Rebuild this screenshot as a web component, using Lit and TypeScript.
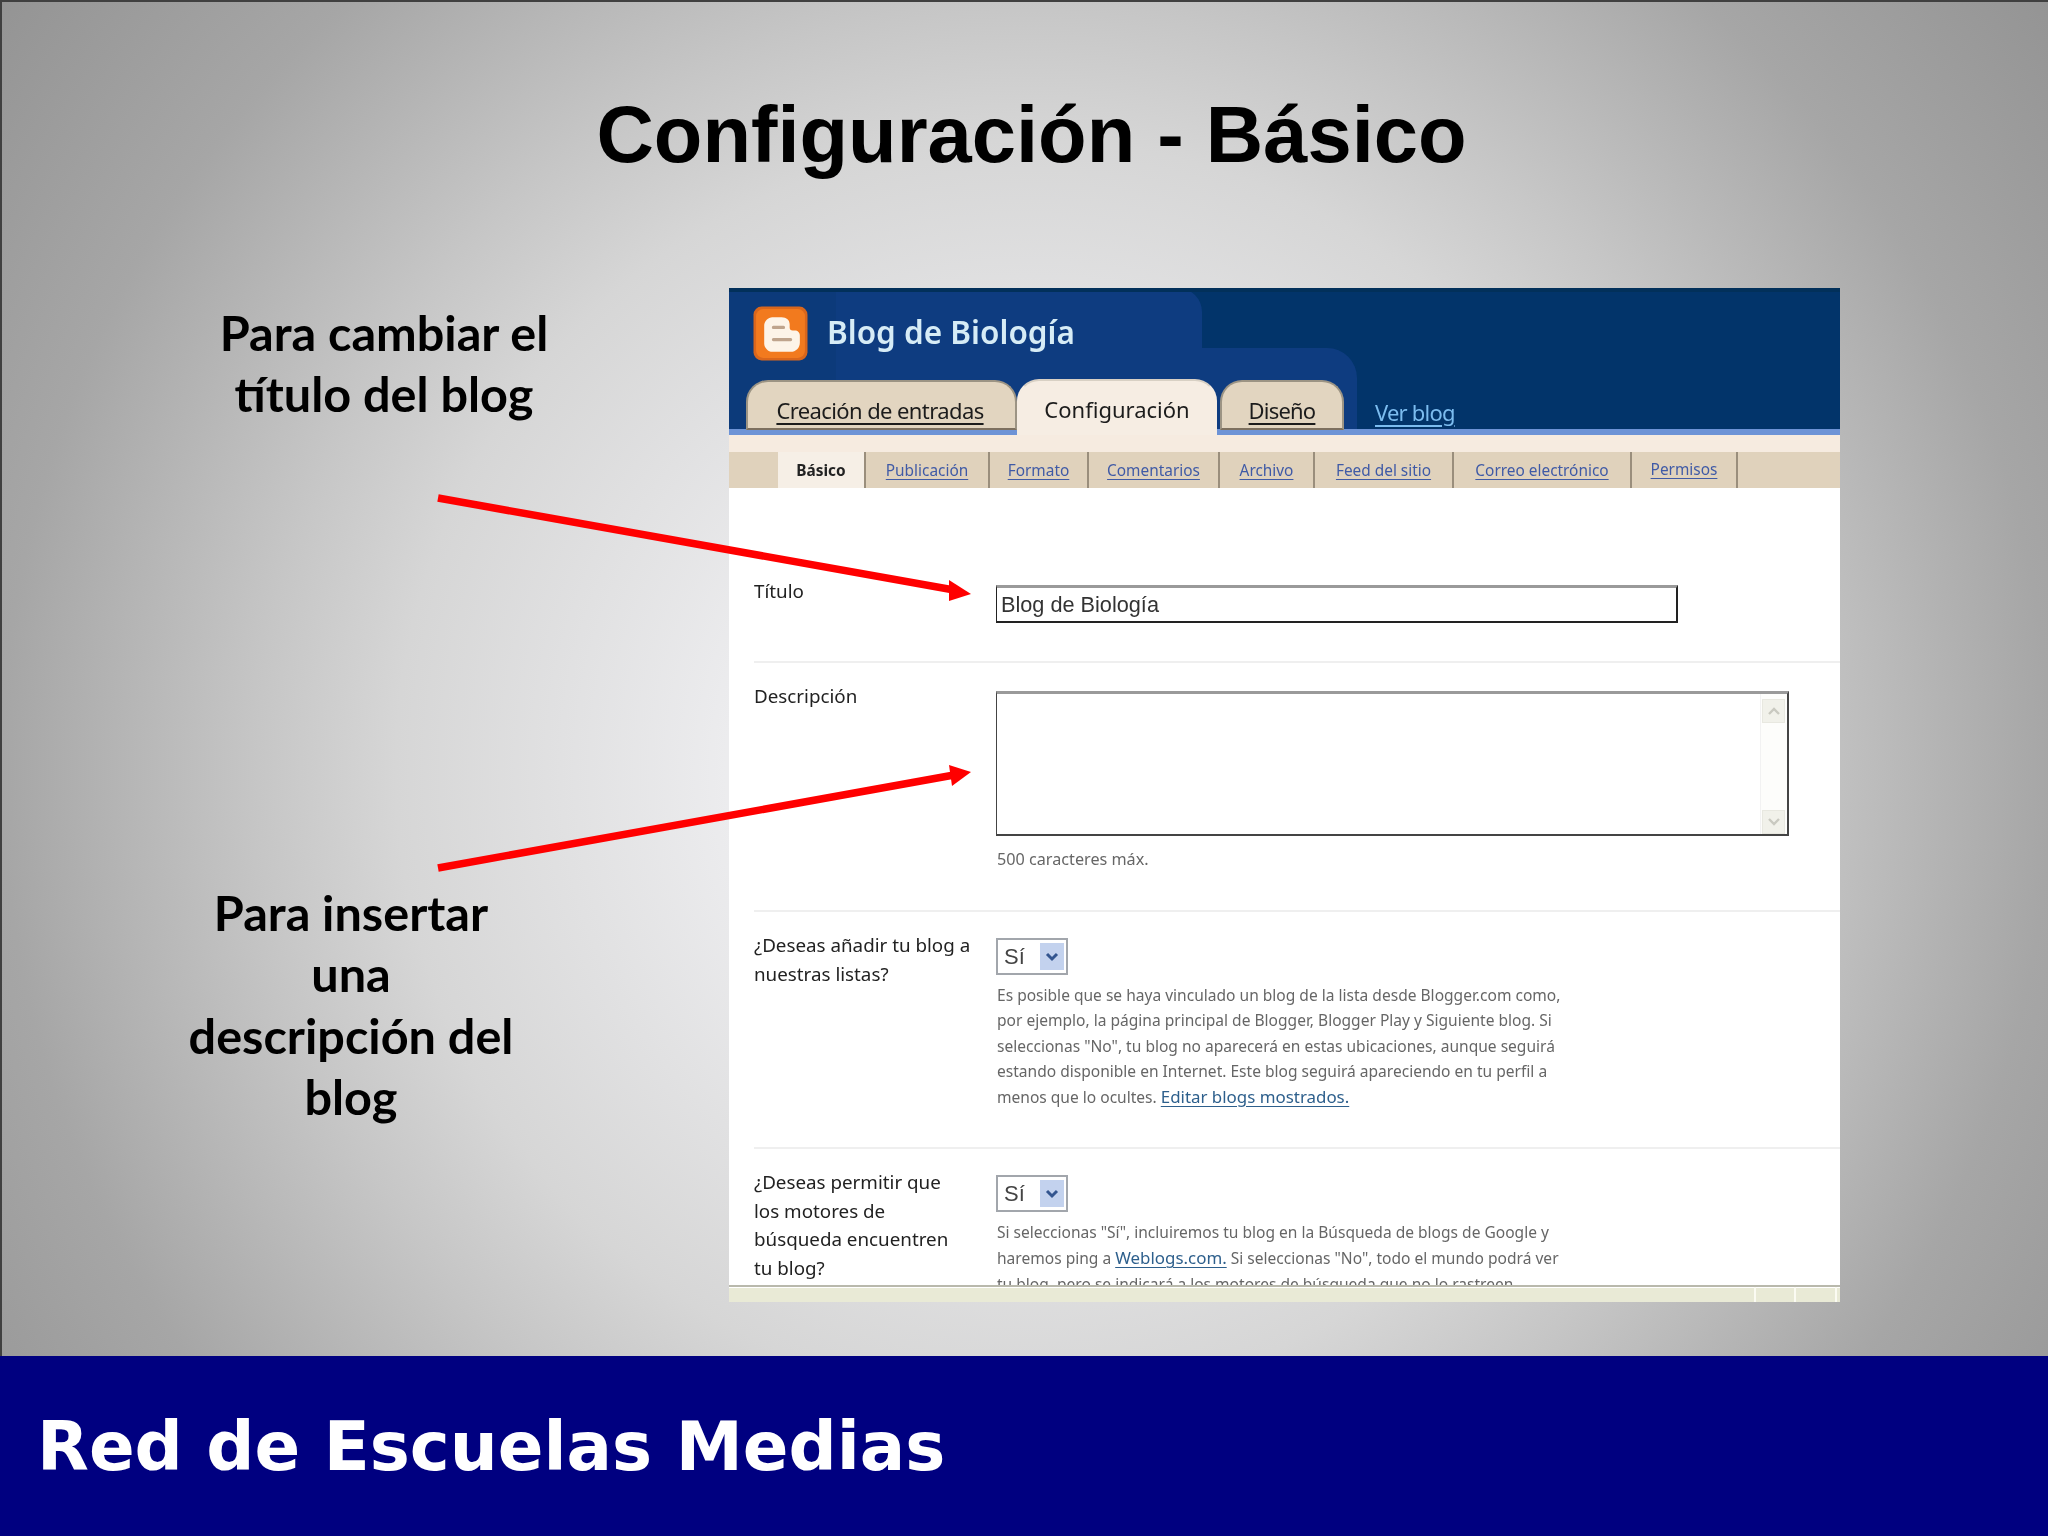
import { LitElement, html, css } from "lit";
import { customElement } from "lit/decorators.js";

const subTabs = [
  ["Publicación", 124],
  ["Formato", 99],
  ["Comentarios", 131],
  ["Archivo", 95],
  ["Feed del sitio", 139],
  ["Correo electrónico", 178],
  ["Permisos", 106],
] as const;

@customElement("app-root")
export class AppRoot extends LitElement {
  static styles = css`
    :host { display: block; width: 2048px; height: 1536px; overflow: hidden; }
    * { box-sizing: border-box; }
    .slide { width: 2048px; height: 1536px; display: flex; flex-direction: column; }
    .stage {
      position: relative; height: 1356px; display: flex; flex-direction: column;
      border-left: 2px solid #404040; border-top: 2px solid #404040;
      background: radial-gradient(circle 1280px at 1024px 768px, #f0f0f2 0px, #ececee 300px, #d6d6d6 630px, #c6c6c6 768px, #a6a6a6 1024px, #949494 1280px);
    }
    h1 {
      margin: 0; height: 286px; padding: 0 0 20px 13px; display: flex; align-items: center; justify-content: center;
      font: 700 79.5px "Liberation Sans", Arial, sans-serif; color: #000;
    }
    .body { display: flex; }
    .notes { width: 727px; flex: none; display: flex; flex-direction: column; }
    .note { width: 420px; text-align: center; font: 700 48.6px/61.4px Lato, sans-serif; color: #000; }
    .note.first { margin: 14px 0 0 172px; }
    .note.second { margin: 457px 0 0 139px; }

    .panel { width: 1111px; height: 1014px; display: flex; flex-direction: column; background: #fff; overflow: hidden; font-family: "Noto Sans", sans-serif; filter: blur(0.45px); }
    .head { position: relative; height: 147px; flex: none; background: #02346a; border-top: 4px solid #02305a; overflow: hidden; }
    .glow { position: absolute; background: #0e3c80; }
    .glow.a { left: 0; top: -4px; width: 108px; height: 148px; background: #0c3a7a; }
    .glow.b { left: 107px; top: -4px; width: 366px; height: 148px; border-radius: 0 24px 0 0; }
    .glow.c { left: 366px; top: 56px; width: 262px; height: 88px; border-radius: 0 30px 0 0; }
    .brand { position: relative; display: flex; align-items: center; gap: 19px; padding: 13px 0 0 24px; height: 70px; }
    .brand svg { width: 55px; height: 55px; flex: none; }
    .brand span { font: 600 31.5px/1 "Noto Sans", sans-serif; color: #d6ecf6; padding-bottom: 4px; }
    .tabs { position: absolute; left: 0; right: 0; bottom: 0; height: 61px; display: flex; align-items: flex-end; padding-left: 17px; border-bottom: 6px solid #6d93d6; }
    .tab {
      height: 50px; margin-bottom: -1px; padding-top: 10px; display: flex; align-items: center; justify-content: center;
      background: #e2d5c0; border: 2px solid #9c9484; border-bottom: 2px solid #7d705f; border-radius: 22px 22px 0 0;
      font: 400 22px/1 "Noto Sans", sans-serif; color: #1c1c1c; text-decoration: underline; text-underline-offset: 4px;
    }
    .tab.active { background: #f6ede3; border-color: #f6ede3; text-decoration: none; height: 56px; margin-bottom: -6px; border-top-color: #d8d0c4; padding-top: 4px; }
    .tab.t1 { width: 271px; letter-spacing: -0.6px; padding-right: 3px; }
    .tab.t2 { width: 200px; }
    .tab.t3 { width: 124px; margin-left: 3px; letter-spacing: -0.8px; }
    .ver { margin: 0 0 6px 31px; font: 400 22px/1 "Noto Sans", sans-serif; color: #7cbcef; letter-spacing: -0.8px; text-decoration: underline; text-underline-offset: 4px; }

    .strip { height: 17px; flex: none; background: #f6ebe0; }
    .sub { height: 36px; flex: none; display: flex; background: #e0d2bc; padding-left: 49px; }
    .sub > * { display: flex; align-items: center; justify-content: center; border-right: 2px solid #9a8e7c; font: 400 15.4px/1 "Noto Sans", sans-serif; padding-top: 2px; }
    .sub .on { width: 88px; background: #f6efe6; font-weight: 700; color: #222; }
    .sub a { color: #3f5aa6; text-decoration: underline; text-underline-offset: 3px; }
    .sub a.raised { padding-bottom: 3px; }

    .form { flex: 1; min-height: 0; overflow: hidden; background: #fff; }
    .row { display: grid; grid-template-columns: 242px 1fr; margin-left: 25px; border-bottom: 2px solid #efefef; }
    .row.r1 { height: 175px; padding-top: 97px; }
    .row.r2 { height: 249px; padding-top: 28px; }
    .row.r3 { height: 237px; padding-top: 26px; }
    .row.r4 { height: 150px; padding-top: 26px; border: 0; }
    .label { font: 400 18.8px/28.5px "Noto Sans", sans-serif; color: #222; margin-top: -7px; }
    .r1 .label { margin-top: -8px; }
    .r2 .label { margin-top: -9px; }
    .input {
      width: 682px; height: 38px; border: solid #222; border-width: 0 2px 2px 1px; border-top: 3px solid #9a9a9a;
      font: 400 21.7px/34px "Liberation Sans", sans-serif; color: #333; padding-left: 4px;
    }
    .area { position: relative; width: 793px; height: 145px; border: solid #444; border-width: 3px 2px 2px 1px; border-top-color: #9a9a9a; display: flex; justify-content: flex-end; }
    .scroll { width: 27px; display: flex; flex-direction: column; justify-content: space-between; border-left: 1px solid #f2f2f2; padding: 5px 1px 0; background: #fdfdfb; }
    .scroll span { width: 23px; height: 24px; background: #f1f1ea; border: 1px solid #e8e8e0; display: flex; align-items: center; justify-content: center; }
    .scroll svg { width: 14px; height: 10px; }
    .hint { margin: 13px 0 0 1px; font: 400 16.2px/20px "Noto Sans", sans-serif; color: #666; }
    .select { width: 72px; height: 37px; border: 2px solid #a2a6ac; display: flex; align-items: center; justify-content: space-between; font: 400 22px/1 "Liberation Sans", sans-serif; color: #444; padding: 0 2px 0 6px; background: #fff; }
    .select i { width: 24px; height: 27px; background: #c3d2ee; display: flex; align-items: center; justify-content: center; }
    .select svg { width: 14px; height: 12px; }
    .help { margin: 8px 0 0 1px; font: 400 15.55px/25.3px "Noto Sans", sans-serif; color: #666; white-space: nowrap; }
    .help a { font-size: 16.9px; color: #2d5f8c; text-decoration: underline; text-underline-offset: 3px; }
    .status { height: 17px; flex: none; display: flex; justify-content: flex-end; background: #e9ead6; border-top: 2px solid #b9b9ac; box-shadow: inset 0 1px 0 #fff; }
    .status span { border-left: 2px solid #fbfbf2; }
    .status .s1 { width: 40px; }
    .status .s2 { width: 41px; }
    .status .s3 { width: 5px; }

    .arrows { position: absolute; left: -2px; top: -2px; width: 2048px; height: 1356px; pointer-events: none; }
    footer { height: 180px; flex: none; background: #000080; color: #fff; padding: 47px 0 0 37px; font: 700 67.4px/1.3 "DejaVu Sans", Verdana, sans-serif; }
  `;

  private chevron(d: string) {
    return html`<svg viewBox="0 0 14 10"><path d=${d} fill="none" stroke="#c9c9c0" stroke-width="2.4"/></svg>`;
  }

  private select() {
    return html`<div class="select">Sí<i><svg viewBox="0 0 14 12"><path d="M2 3l5 5 5-5" fill="none" stroke="#33558f" stroke-width="3"/></svg></i></div>`;
  }

  render() {
    return html`
      <div class="slide">
        <main class="stage">
          <h1>Configuración - Básico</h1>
          <div class="body">
            <div class="notes">
              <div class="note first">Para cambiar el<br />título del blog</div>
              <div class="note second">Para insertar<br />una<br />descripción del<br />blog</div>
            </div>
            <section class="panel">
              <div class="head">
                <i class="glow a"></i><i class="glow b"></i><i class="glow c"></i>
                <div class="brand">
                  <svg viewBox="0 0 54 54">
                    <rect x="0.5" y="0.5" width="53" height="53" rx="8" fill="#d9661c"/>
                    <rect x="3" y="3" width="48" height="48" rx="7" fill="#f27a1e"/>
                    <path d="M19 11h9c5 0 8 3 8 7v3c0 2 1 3 3 3h2c3 0 5 2 5 5v7c0 5-4 9-9 9H19c-4 0-8-4-8-8V19c0-4 4-8 8-8z" fill="#fdf4e8"/>
                    <path d="M20 21h10M20 33h17" stroke="#bfa48c" stroke-width="3" stroke-linecap="round"/>
                  </svg>
                  <span>Blog de Biología</span>
                </div>
                <div class="tabs">
                  <div class="tab t1">Creación de entradas</div>
                  <div class="tab t2 active">Configuración</div>
                  <div class="tab t3">Diseño</div>
                  <a class="ver">Ver blog</a>
                </div>
              </div>
              <div class="strip"></div>
              <nav class="sub">
                <span class="on">Básico</span>
                ${subTabs.map(
                  ([t, w]) => html`<span style="width:${w}px"><a class=${t === "Permisos" ? "raised" : ""}>${t}</a></span>`
                )}
              </nav>
              <div class="form">
                <div class="row r1">
                  <div class="label">Título</div>
                  <div class="input">Blog de Biología</div>
                </div>
                <div class="row r2">
                  <div class="label">Descripción</div>
                  <div>
                    <div class="area">
                      <div class="scroll">
                        <span>${this.chevron("M2 8l5-5 5 5")}</span>
                        <span>${this.chevron("M2 2l5 5 5-5")}</span>
                      </div>
                    </div>
                    <div class="hint">500 caracteres máx.</div>
                  </div>
                </div>
                <div class="row r3">
                  <div class="label">¿Deseas añadir tu blog a<br />nuestras listas?</div>
                  <div>
                    ${this.select()}
                    <div class="help">Es posible que se haya vinculado un blog de la lista desde Blogger.com como,<br />por ejemplo, la página principal de Blogger, Blogger Play y Siguiente blog. Si<br />seleccionas "No", tu blog no aparecerá en estas ubicaciones, aunque seguirá<br />estando disponible en Internet. Este blog seguirá apareciendo en tu perfil a<br />menos que lo ocultes. <a>Editar blogs mostrados.</a></div>
                  </div>
                </div>
                <div class="row r4">
                  <div class="label">¿Deseas permitir que<br />los motores de<br />búsqueda encuentren<br />tu blog?</div>
                  <div>
                    ${this.select()}
                    <div class="help">Si seleccionas "Sí", incluiremos tu blog en la Búsqueda de blogs de Google y<br />haremos ping a <a>Weblogs.com.</a> Si seleccionas "No", todo el mundo podrá ver<br />tu blog, pero se indicará a los motores de búsqueda que no lo rastreen.</div>
                  </div>
                </div>
              </div>
              <div class="status"><span class="s1"></span><span class="s2"></span><span class="s3"></span></div>
            </section>
          </div>
          <svg class="arrows" viewBox="0 0 2048 1356">
            <line x1="438" y1="498" x2="954" y2="590" stroke="#f00" stroke-width="7.5"/>
            <polygon points="971,594 949,580 949,601" fill="#f00"/>
            <line x1="438" y1="868" x2="954" y2="775" stroke="#f00" stroke-width="7.5"/>
            <polygon points="971,772 949,765 952,786" fill="#f00"/>
          </svg>
        </main>
        <footer>Red de Escuelas Medias</footer>
      </div>
    `;
  }
}
